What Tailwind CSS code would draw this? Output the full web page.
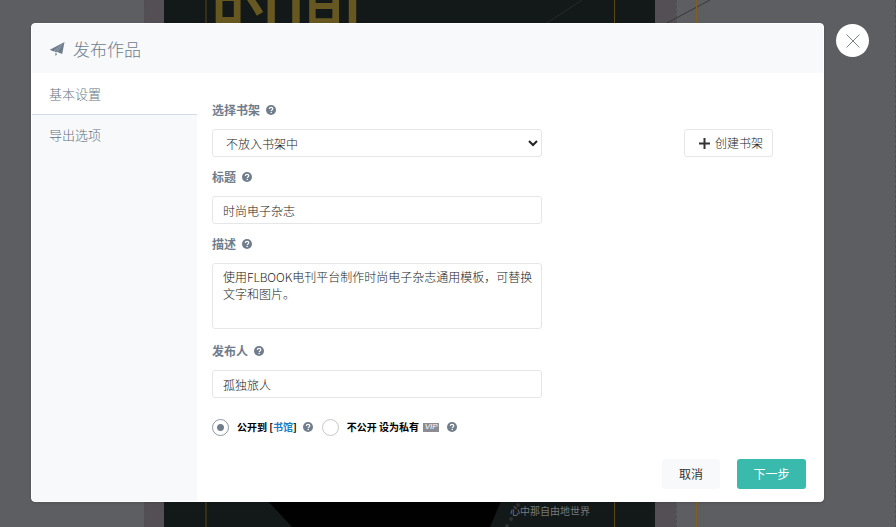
<!DOCTYPE html>
<html lang="zh-CN">
<head>
  <meta charset="UTF-8" />
  <meta name="viewport" content="width=device-width, initial-scale=1.0"/>
  <title>发布作品</title>
  <script src="https://cdn.jsdelivr.net/npm/@tailwindcss/browser@4"></script>
</head>
<body class="relative min-h-screen overflow-hidden bg-[#5c5e62] font-['Noto_Sans_CJK_SC','Liberation_Sans',sans-serif] text-xs text-[#222]">

  <svg class="hidden">
    <symbol id="help" viewBox="0 0 16 16">
      <circle cx="8" cy="8" r="8" fill="#6f7d8c"/>
      <path d="M5.3 6.3C5.4 4.6 6.5 3.7 8.1 3.7c1.6 0 2.8.9 2.8 2.3 0 1.9-2.5 1.9-2.5 3.7" fill="none" stroke="#fff" stroke-width="1.9"/>
      <rect x="7.3" y="10.9" width="2.1" height="2" fill="#fff"/>
    </symbol>
  </svg>

  <!-- page under the dialog -->
  <svg class="absolute inset-0 size-full" viewBox="0 0 896 527" preserveAspectRatio="none" aria-hidden="true">
    <rect x="144" width="532" height="527" fill="#534f54"/>
    <path d="M144.5 0V527M676.5 0V527M895.5 0V527" stroke="#504f53" stroke-dasharray="3 2"/>
    <rect x="164" width="491" height="527" fill="#131818"/>
    <path d="M268 501L292 527H490L501 501Z" fill="#020101"/>
    <path d="M582 0L547 23" stroke="#292b2b"/>
    <path d="M710 0L667 23" stroke="#37383a"/>
    <path d="M206 0V527M614.5 0V527" stroke="#5f4510"/>
    <path d="M696.5 0V527" stroke="#80601f"/>
    <circle cx="518" cy="505" r="2" fill="#2c3030"/>
    <circle cx="511" cy="519" r="2" fill="#2c3030"/>
    <circle cx="507" cy="526" r="2" fill="#2c3030"/>
    <text x="210" y="31" font-size="76" font-weight="500" fill="#665820">时间</text>
    <text x="510" y="515" font-size="10" fill="#777a7a">心中那自由地世界</text>
  </svg>

  <div class="relative flex items-start gap-3 pt-[23px] pr-[27px] pl-[31px]">
    <div class="flex-1 overflow-hidden rounded border border-white bg-white shadow" role="dialog" aria-labelledby="dialogTitle">
      <header class="flex h-[49px] items-center gap-2 bg-[#f7f9fb] pl-[17px] text-[#6f7d8c]">
        <svg class="size-4" viewBox="0 0 16 16" fill="#6f7d8c">
          <path d="M15.5 1L.8 8.8l3.9 1.6zM15.5 1L5.2 10.6l2.2.9zM15.5 1l-2.3 12-5.6-2.300zM6.200 12l2 .9-1.600 2z"/>
        </svg>
        <h1 id="dialogTitle" class="text-[17px] leading-6 font-light">发布作品</h1>
      </header>

      <div class="flex">
        <nav class="w-[165px] bg-[#f7f9fb] text-[13px] leading-5 font-light text-[#66737f]">
          <a href="#basic" class="block border-b border-[#cfdbe5] bg-white pt-[11px] pb-[10px] pl-[17px]">基本设置</a>
          <a href="#export" class="block py-[10px] pl-[17px]">导出选项</a>
        </nav>

        <form class="flex-1 pt-[27px] pb-3 pl-[15px]">
          <div class="flex items-center gap-[6px] leading-5 font-bold text-[#6f7d8c]">
            <label for="shelf">选择书架</label>
            <svg class="size-[10px]"><use href="#help"/></svg>
          </div>
          <div class="mt-[9px] flex justify-between pr-[50px]">
            <select id="shelf" class="h-7 w-[330px] rounded-[3px] border border-[#e5e6e7] bg-white pl-[9px] font-light">
              <option>不放入书架中</option>
            </select>
            <button type="button" class="flex h-7 items-center gap-[5px] rounded-[3px] border border-[#e5e6e7] bg-white pr-[9px] pl-[14px] font-light">
              <svg class="size-[11px]" viewBox="0 0 11 11" stroke="#333" stroke-width="2"><path d="M5.5 0v11M0 5.5h11"/></svg>
              创建书架
            </button>
          </div>

          <div class="mt-[10px] flex items-center gap-[6px] leading-5 font-bold text-[#6f7d8c]">
            <label for="title">标题</label>
            <svg class="size-[10px]"><use href="#help"/></svg>
          </div>
          <input id="title" type="text" value="时尚电子杂志" class="mt-[9px] block h-7 w-[330px] rounded-[3px] border border-[#e5e6e7] px-[10px] font-light"/>

          <div class="mt-[10px] flex items-center gap-[6px] leading-5 font-bold text-[#6f7d8c]">
            <label for="desc">描述</label>
            <svg class="size-[10px]"><use href="#help"/></svg>
          </div>
          <textarea id="desc" class="mt-[9px] block h-[66px] w-[330px] resize-none rounded-[3px] border border-[#e5e6e7] py-1 pr-1 pl-[10px] leading-[17px] font-light">使用FLBOOK电刊平台制作时尚电子杂志通用模板，可替换文字和图片。</textarea>

          <div class="mt-3 flex items-center gap-[6px] leading-5 font-bold text-[#6f7d8c]">
            <label for="author">发布人</label>
            <svg class="size-[10px]"><use href="#help"/></svg>
          </div>
          <input id="author" type="text" value="孤独旅人" class="mt-[9px] block h-7 w-[330px] rounded-[3px] border border-[#e5e6e7] px-[10px] font-light"/>

          <div class="mt-[19px] flex items-center text-[10px] leading-5 font-bold text-black">
            <input id="open" type="radio" name="visible" checked class="size-[17px] appearance-none rounded-full border border-[#8d98a3] bg-[radial-gradient(circle,#6f7d8c_3px,transparent_4px)]"/>
            <label for="open" class="ml-2">公开到 [<a href="#library" class="text-[#1c7cc4]">书馆</a>]</label>
            <svg class="ml-[6px] size-[10px]"><use href="#help"/></svg>
            <input id="private" type="radio" name="visible" class="ml-[9px] size-[17px] appearance-none rounded-full border border-[#c4c7ca] checked:bg-[radial-gradient(circle,#6f7d8c_3px,transparent_4px)]"/>
            <label for="private" class="ml-2">不公开 设为私有</label>
            <span class="ml-1 flex h-[9px] w-4 items-center justify-center bg-[#8b8d92] font-['Liberation_Sans',sans-serif] text-[8px] leading-none font-normal text-white italic">VIP</span>
            <svg class="ml-2 size-[10px]"><use href="#help"/></svg>
          </div>

          <div class="mt-[22px] flex justify-end gap-[17px] pr-[17px]">
            <button type="button" class="h-[30px] w-[58px] rounded-[3px] bg-[#f7f9fb] text-[#333]">取消</button>
            <button type="submit" class="h-[30px] w-[69px] rounded-[3px] bg-[#3abaad] text-white">下一步</button>
          </div>
        </form>
      </div>
    </div>

    <button type="button" aria-label="关闭" class="mt-px flex size-[33px] items-center justify-center rounded-full bg-white">
      <svg class="size-[14px]" viewBox="0 0 14 14" stroke="#7b8290"><path d="M.5.5l13 13M13.5.5l-13 13"/></svg>
    </button>
  </div>

</body>
</html>
